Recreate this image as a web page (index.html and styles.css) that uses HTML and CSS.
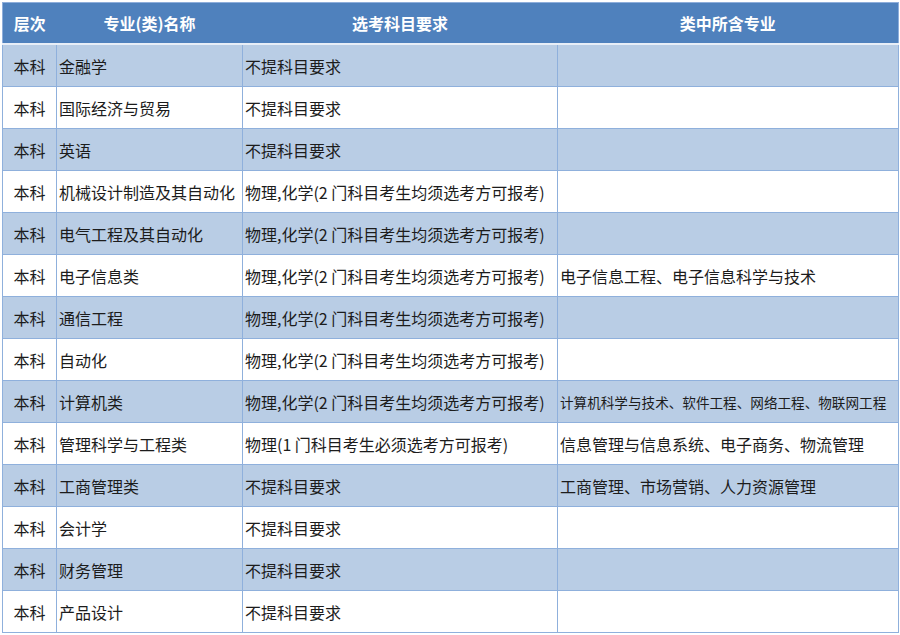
FILE: index.html
```html
<!DOCTYPE html>
<html lang="zh-CN">
<head>
<meta charset="utf-8">
<link rel="stylesheet" href="styles.css">
</head>
<body>
<div class="wrap">
<table class="grid">
  <colgroup>
    <col class="c1"><col class="c2"><col class="c3"><col class="c4">
  </colgroup>
  <thead>
    <tr><th>层次</th><th>专业(类)名称</th><th>选考科目要求</th><th>类中所含专业</th></tr>
  </thead>
  <tbody>
    <tr class="band"><td class="lv">本科</td><td>金融学</td><td>不提科目要求</td><td></td></tr>
    <tr><td class="lv">本科</td><td>国际经济与贸易</td><td>不提科目要求</td><td></td></tr>
    <tr class="band"><td class="lv">本科</td><td>英语</td><td>不提科目要求</td><td></td></tr>
    <tr><td class="lv">本科</td><td>机械设计制造及其自动化</td><td>物理,化学(2 门科目考生均须选考方可报考)</td><td></td></tr>
    <tr class="band"><td class="lv">本科</td><td>电气工程及其自动化</td><td>物理,化学(2 门科目考生均须选考方可报考)</td><td></td></tr>
    <tr><td class="lv">本科</td><td>电子信息类</td><td>物理,化学(2 门科目考生均须选考方可报考)</td><td>电子信息工程、电子信息科学与技术</td></tr>
    <tr class="band"><td class="lv">本科</td><td>通信工程</td><td>物理,化学(2 门科目考生均须选考方可报考)</td><td></td></tr>
    <tr><td class="lv">本科</td><td>自动化</td><td>物理,化学(2 门科目考生均须选考方可报考)</td><td></td></tr>
    <tr class="band"><td class="lv">本科</td><td>计算机类</td><td>物理,化学(2 门科目考生均须选考方可报考)</td><td class="small">计算机科学与技术、软件工程、网络工程、物联网工程</td></tr>
    <tr><td class="lv">本科</td><td>管理科学与工程类</td><td>物理(1 门科目考生必须选考方可报考)</td><td>信息管理与信息系统、电子商务、物流管理</td></tr>
    <tr class="band"><td class="lv">本科</td><td>工商管理类</td><td>不提科目要求</td><td>工商管理、市场营销、人力资源管理</td></tr>
    <tr><td class="lv">本科</td><td>会计学</td><td>不提科目要求</td><td></td></tr>
    <tr class="band"><td class="lv">本科</td><td>财务管理</td><td>不提科目要求</td><td></td></tr>
    <tr><td class="lv">本科</td><td>产品设计</td><td>不提科目要求</td><td></td></tr>
  </tbody>
</table>
</div>
</body>
</html>
```

FILE: styles.css
```css
html, body {
  margin: 0;
  padding: 0;
  background: #ffffff;
}
.wrap {
  padding: 2px 0 0 2px;
}
.grid {
  border-collapse: collapse;
  table-layout: fixed;
  width: 896px;
  font-family: "Noto Sans CJK SC", "Noto Sans", sans-serif;
  font-size: 16px;
  color: #1c1c1c;
}
.c1 { width: 54px; }
.c2 { width: 186px; }
.c3 { width: 315px; }
.c4 { width: 341px; }
.grid th {
  background: #4f81bd;
  color: #ffffff;
  font-weight: bold;
  height: 40px;
  padding: 0;
  text-align: center;
  border-top: 1px solid #8eaedb;
  border-bottom: 2px solid #e8eef7;
  line-height: 20px;
}
.grid th:first-child { border-left: 1px solid #8eaedb; }
.grid th:last-child { border-right: 1px solid #8eaedb; }
.grid td {
  height: 41px;
  padding: 0 0 0 2px;
  border: 1px solid #8fb0dc;
  white-space: nowrap;
  overflow: hidden;
  line-height: 20px;
}
.grid tbody tr:first-child td { border-top: none; }
.grid tr.band td {
  background: #b9cde5;
}
.grid td.lv {
  text-align: center;
  padding: 0;
}
.grid td.small {
  font-size: 13.6px;
  padding-left: 2px;
}
```
